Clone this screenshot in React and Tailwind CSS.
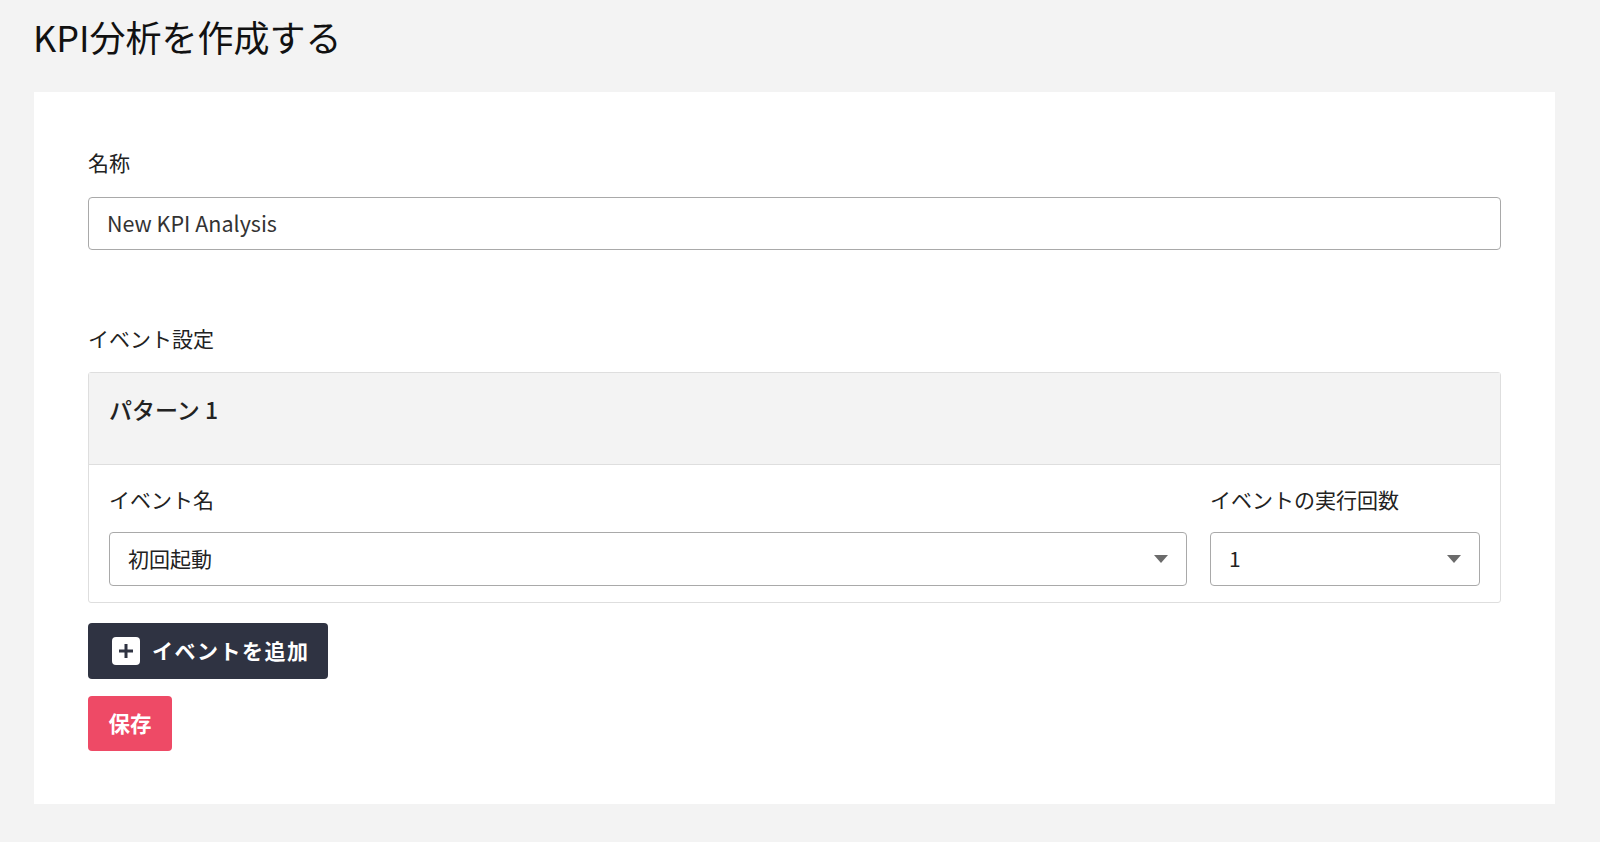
const font = { fontFamily: '"Noto Sans CJK JP", "Noto Sans", sans-serif' };

// 小さな三角のキャレット
const Caret = () => (
  <svg width="14" height="8" viewBox="0 0 14 8" className="shrink-0">
    <path d="M0 0 H14 L7 8 Z" fill="#6b6b6b" />
  </svg>
);

const SelectBox = ({ value }) => (
  <div className="flex items-center justify-between h-[54px] px-[18px] border border-[#a9a9a9] rounded-[4px] bg-white text-[21px] text-[#222]">
    <span>{value}</span>
    <Caret />
  </div>
);

const App = () => {
  return (
    <div
      className="min-h-[842px] w-full bg-[#f3f3f3] text-[#222]"
      style={font}
    >
      {/* タイトル */}
      <div className="px-[33px] pt-[14px] h-[92px]">
        <h1 className="text-[36px] leading-[44px] font-normal text-[#111]">
          KPI分析を作成する
        </h1>
      </div>

      {/* フォームパネル */}
      <div className="mx-[34px] w-[1521px] bg-white px-[54px] pt-[56px] pb-[53px]">
        <div className="text-[21px] leading-[28px]">名称</div>
        <div className="mt-[21px] flex items-center h-[53px] px-[18px] border border-[#a9a9a9] rounded-[4px] text-[21.5px] text-[#333]">
          New KPI Analysis
        </div>

        <div className="mt-[74px] text-[21px] leading-[28px]">イベント設定</div>

        {/* パターンカード */}
        <div className="mt-[20px] border border-[#dedede] rounded-[3px]">
          <div className="h-[92px] bg-[#f3f3f3] border-b border-[#dedede] px-[20px] pt-[22px]">
            <div className="text-[23px] leading-[28px] font-medium">パターン 1</div>
          </div>
          <div className="flex gap-[23px] px-[20px] pt-[20px] pb-[16px]">
            <div className="flex-1">
              <div className="text-[21px] leading-[28px]">イベント名</div>
              <div className="mt-[19px]">
                <SelectBox value="初回起動" />
              </div>
            </div>
            <div className="w-[270px]">
              <div className="text-[21px] leading-[28px]">イベントの実行回数</div>
              <div className="mt-[19px]">
                <SelectBox value="1" />
              </div>
            </div>
          </div>
        </div>

        {/* ボタン */}
        <button className="mt-[20px] flex items-center gap-[12px] h-[56px] w-[240px] pl-[24px] pr-0 bg-[#2f3342] rounded-[4px] text-white text-[21px] font-bold whitespace-nowrap">
          <span className="flex shrink-0 items-center justify-center w-[28px] h-[28px] bg-white rounded-[4px]">
            <svg width="16" height="16" viewBox="0 0 16 16">
              <path d="M8 1 V15 M1 8 H15" stroke="#2f3342" strokeWidth="3" />
            </svg>
          </span>
          <span className="tracking-[1.5px]">イベントを追加</span>
        </button>

        <button className="mt-[17px] flex items-center justify-center h-[55px] w-[84px] bg-[#ee4a66] rounded-[4px] text-white text-[21.5px] font-bold">
          保存
        </button>
      </div>
    </div>
  );
};

export default App;
